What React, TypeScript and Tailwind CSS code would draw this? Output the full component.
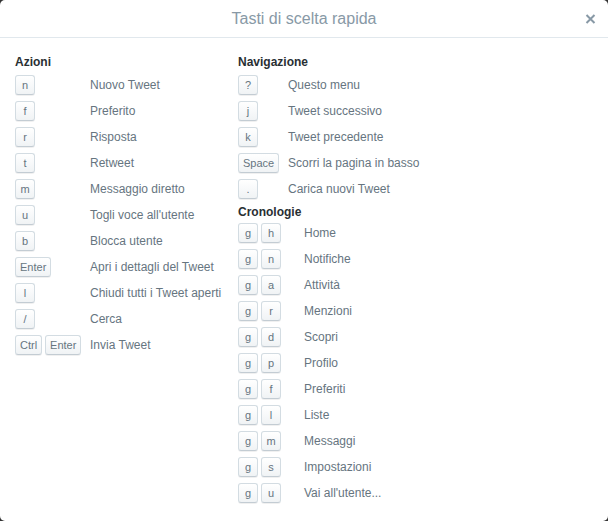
import React from "react";

type Row = { keys: string[]; label: string };

const azioni: Row[] = [
  { keys: ["n"], label: "Nuovo Tweet" },
  { keys: ["f"], label: "Preferito" },
  { keys: ["r"], label: "Risposta" },
  { keys: ["t"], label: "Retweet" },
  { keys: ["m"], label: "Messaggio diretto" },
  { keys: ["u"], label: "Togli voce all'utente" },
  { keys: ["b"], label: "Blocca utente" },
  { keys: ["Enter"], label: "Apri i dettagli del Tweet" },
  { keys: ["l"], label: "Chiudi tutti i Tweet aperti" },
  { keys: ["/"], label: "Cerca" },
  { keys: ["Ctrl", "Enter"], label: "Invia Tweet" },
];

const navigazione: Row[] = [
  { keys: ["?"], label: "Questo menu" },
  { keys: ["j"], label: "Tweet successivo" },
  { keys: ["k"], label: "Tweet precedente" },
  { keys: ["Space"], label: "Scorri la pagina in basso" },
  { keys: ["."], label: "Carica nuovi Tweet" },
];

const cronologie: Row[] = [
  { keys: ["g", "h"], label: "Home" },
  { keys: ["g", "n"], label: "Notifiche" },
  { keys: ["g", "a"], label: "Attività" },
  { keys: ["g", "r"], label: "Menzioni" },
  { keys: ["g", "d"], label: "Scopri" },
  { keys: ["g", "p"], label: "Profilo" },
  { keys: ["g", "f"], label: "Preferiti" },
  { keys: ["g", "l"], label: "Liste" },
  { keys: ["g", "m"], label: "Messaggi" },
  { keys: ["g", "s"], label: "Impostazioni" },
  { keys: ["g", "u"], label: "Vai all'utente..." },
];

function Key({ k }: { k: string }) {
  return (
    <span className="inline-flex h-[20px] min-w-[20px] items-center justify-center rounded-[3px] border border-[#d3dce2] border-b-[#c3ccd3] bg-gradient-to-b from-white to-[#f0f3f5] px-[4px] text-[11px] leading-none text-[#66757f] shadow-[0_1px_0_rgba(0,0,0,0.06)]">
      {k}
    </span>
  );
}

function Section({
  title,
  rows,
  keyW,
  wrap,
  head,
}: {
  title: string;
  rows: Row[];
  keyW: string;
  wrap: string;
  head: string;
}) {
  return (
    <div className={wrap}>
      <div className={`text-[12px] font-bold leading-[18px] text-[#292f33] ${head}`}>{title}</div>
      {rows.map((r, i) => (
        <div key={i} className="mb-[6px] flex h-[20px] items-center">
          <div className={`flex shrink-0 gap-[3px] ${keyW}`}>
            {r.keys.map((k, j) => (
              <Key key={j} k={k} />
            ))}
          </div>
          <div className="whitespace-nowrap text-[12px] leading-[20px] text-[#66757f]">{r.label}</div>
        </div>
      ))}
    </div>
  );
}

export default function App() {
  return (
    <div className="h-[521px] w-[608px] bg-[#333]" style={{ fontFamily: '"Liberation Sans", Arial, sans-serif' }}>
      <div className="h-full w-full overflow-hidden rounded-[5px] bg-white">
        <div className="relative flex h-[38px] items-center justify-center border-b border-[#e1e8ed]">
          <span className="text-[16px] text-[#8899a6]">Tasti di scelta rapida</span>
          <svg className="absolute right-[12px] top-[14px]" width="11" height="10" viewBox="0 0 11 10">
            <path d="M1.5 1 L9.5 9 M9.5 1 L1.5 9" stroke="#8899a6" strokeWidth="2" strokeLinecap="butt" />
          </svg>
        </div>
        <div className="flex px-[15px] pt-[15px]">
          <div className="w-[223px]">
            <Section title="Azioni" rows={azioni} keyW="w-[75px]" wrap="" head="mb-[4px]" />
          </div>
          <div>
            <Section title="Navigazione" rows={navigazione} keyW="w-[50px]" wrap="" head="mb-[4px]" />
            <Section title="Cronologie" rows={cronologie} keyW="w-[66px]" wrap="-mt-[2px]" head="mb-[2px]" />
          </div>
        </div>
      </div>
    </div>
  );
}
